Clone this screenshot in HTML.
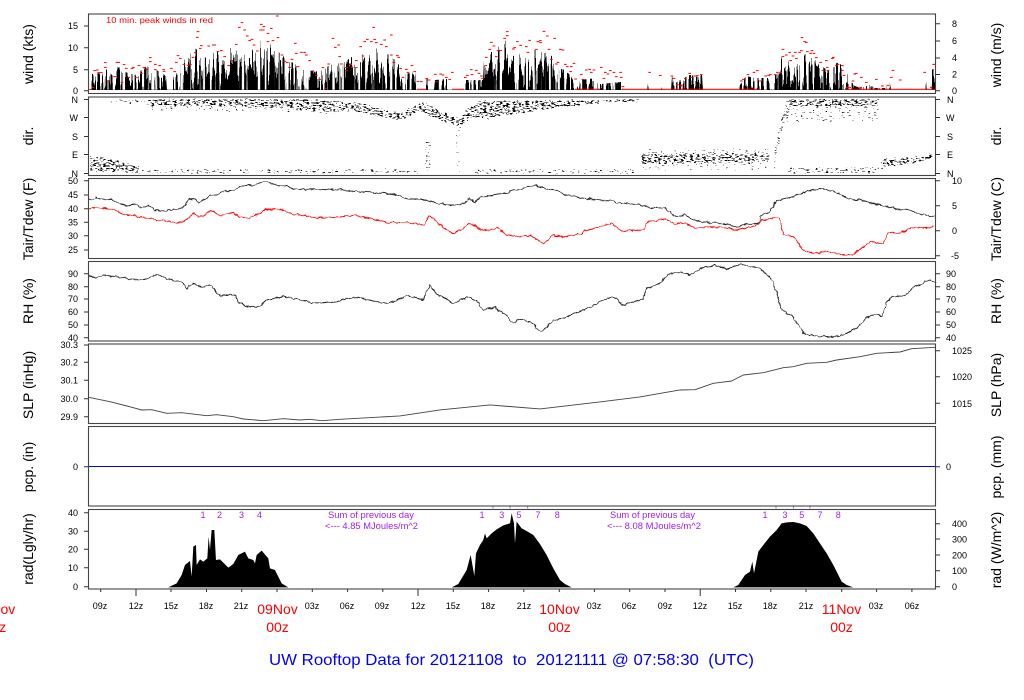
<!DOCTYPE html>
<html><head><meta charset="utf-8"><title>UW Rooftop Data</title>
<style>
html,body{margin:0;padding:0;background:#fff;width:1024px;height:700px;overflow:hidden}
svg{display:block}
text{font-family:"Liberation Sans",sans-serif;fill:#000}
.t{font-size:9px}
.l{font-size:14px;text-anchor:middle}
.e{text-anchor:end}
.r{fill:#f00}
.p{fill:#a020f0;font-size:9px;text-anchor:middle}
.q{fill:#a020f0;font-size:9px}
.c{text-anchor:middle}
</style></head><body>
<svg xmlns="http://www.w3.org/2000/svg" width="1024" height="700" viewBox="0 0 1024 700">
<defs>
<filter id="spk" filterUnits="userSpaceOnUse" x="88" y="0" width="848" height="140" color-interpolation-filters="sRGB">
<feTurbulence type="fractalNoise" baseFrequency="0.47 0.003" numOctaves="2" seed="7" result="n"/>
<feColorMatrix in="n" type="matrix" values="1 0 0 0 0  0 0 0 0 .5  0 0 0 0 .5  0 0 0 0 1" result="d"/>
<feDisplacementMap in="SourceGraphic" in2="d" scale="90" xChannelSelector="G" yChannelSelector="R" result="s"/>
<feTurbulence type="fractalNoise" baseFrequency="0.31 0.002" numOctaves="1" seed="11" result="g"/>
<feColorMatrix in="g" type="matrix" values="0 0 0 0 0  0 0 0 0 0  0 0 0 0 0  0 12 0 0 -4.2" result="gm"/>
<feComposite in="s" in2="gm" operator="in" result="c"/>
<feGaussianBlur in="c" stdDeviation=".35 0"/>
</filter>
<filter id="speck" filterUnits="userSpaceOnUse" x="88" y="97" width="848" height="79" color-interpolation-filters="sRGB">
<feGaussianBlur in="SourceAlpha" stdDeviation="1" result="b"/>
<feTurbulence type="fractalNoise" baseFrequency="0.31 0.73" numOctaves="3" seed="23" result="n"/>
<feColorMatrix in="n" type="matrix" values="0 0 0 0 0  0 0 0 0 0  0 0 0 0 0  1 0 0 0 0" result="na"/>
<feComposite in="na" in2="b" operator="arithmetic" k1="1" k2="0" k3="0" k4="0" result="m"/>
<feComponentTransfer in="m"><feFuncA type="linear" slope="40" intercept="-22.4"/></feComponentTransfer>
</filter>
<filter id="jit" filterUnits="userSpaceOnUse" x="80" y="170" width="870" height="180" color-interpolation-filters="sRGB">
<feTurbulence type="fractalNoise" baseFrequency="0.22" numOctaves="2" seed="5" result="n"/>
<feColorMatrix in="n" type="matrix" values="1 0 0 0 0  0 1 0 0 0  0 0 0 0 0  0 0 0 0 1" result="d"/>
<feDisplacementMap in="SourceGraphic" in2="d" scale="3.5" xChannelSelector="G" yChannelSelector="R"/>
</filter>
<clipPath id="envclip"><polygon points="88,90 90,90 92,74 100,73 105,68 115,78 118,66 125,72 135,75 148,65 160,72 166,76 167,90 172,90 173,72 180,65 195,48 205,57 215,52 232,47 236,46 250,45 262,39 270,42 285,58 300,67 315,72 330,65 345,62 360,50 372,46 385,52 395,60 399,65 400,75 415,72 417,90 424,90 425,78 428,78 430,90 434,90 435,80 447,79 451,90 464,90 465,80 483,80 484,60 490,52 495,52 505,38 508,48 510,58 520,52 535,50 545,52 555,58 557,68 565,70 573,78 579,90 580,80 597,78 599,90 600,84 621,82 623,90 647,90 648,75 650,90 659,90 660,84 662,90 671,90 672,76 674,84 680,80 690,75 702,75 703,90 739,90 740,85 746,76 755,78 770,78 780,72 781,56 790,62 800,65 805,54 815,60 820,65 830,72 835,62 845,66 850,80 855,86 860,88 870,85 875,88 885,88 890,82 891,90 900,90 901,84 902,90 915,90 916,86 917,90 923,90 924,72 926,80 927,90 931,90 932,70 935,66 935,90"/></clipPath>
</defs>
<rect width="1024" height="700" fill="#fff"/>

<line x1="88" y1="89.500" x2="935" y2="89.500" stroke="#bbb" stroke-width="1"/>
<g clip-path="url(#envclip)">
<g filter="url(#spk)">
<polygon transform="translate(0,90) scale(1,.6) translate(0,-90)" points="88,90 90,90 92,74 100,73 105,68 115,78 118,66 125,72 135,75 148,65 160,72 166,76 167,90 172,90 173,72 180,65 195,48 205,57 215,52 232,47 236,46 250,45 262,39 270,42 285,58 300,67 315,72 330,65 345,62 360,50 372,46 385,52 395,60 399,65 400,75 415,72 417,90 424,90 425,78 428,78 430,90 434,90 435,80 447,79 451,90 464,90 465,80 483,80 484,60 490,52 495,52 505,38 508,48 510,58 520,52 535,50 545,52 555,58 557,68 565,70 573,78 579,90 580,80 597,78 599,90 600,84 621,82 623,90 647,90 648,75 650,90 659,90 660,84 662,90 671,90 672,76 674,84 680,80 690,75 702,75 703,90 739,90 740,85 746,76 755,78 770,78 780,72 781,56 790,62 800,65 805,54 815,60 820,65 830,72 835,62 845,66 850,80 855,86 860,88 870,85 875,88 885,88 890,82 891,90 900,90 901,84 902,90 915,90 916,86 917,90 923,90 924,72 926,80 927,90 931,90 932,70 935,66 935,230 88,230"/>
</g>
</g>
<path fill="none" stroke="#f00" stroke-width="1" d="M417 89.300H427M452 89.300H464M575 89.300H600M622 89.300H760M845 89.300H935"/>
<!-- gust dashes -->
<g fill="none" stroke="#f00" stroke-width="3">
<path transform="scale(.3333)" d="M268 268h8M275 262h8M280 212h8M288 210h8M292 218h8M300 218h8M312 202h8M312 188h8M322 243h8M340 230h8M347 187h8M352 187h8M362 247h8M368 194h8M375 205h8M382 232h8M392 205h8M396 203h8M405 233h8M413 197h8M420 220h8M428 203h8M436 209h8M447 173h8M447 185h8M462 193h8M462 209h8M475 197h8M487 209h8M488 214h8M510 205h8M520 215h8M525 187h8M530 167h8M537 175h8M548 193h8M560 196h8M567 193h8M575 172h8M582 158h8M588 112h8M590 95h8M597 145h8M600 137h8M622 138h8M636 135h8M640 135h8M650 155h8M660 152h8M670 170h8M682 197h8M690 182h8M705 133h8M714 82h8M722 68h8M730 90h8M738 108h8M745 122h8M752 118h8M758 135h8M768 153h8M778 90h8M780 73h8M786 90h8M788 80h8M800 100h8M800 125h8M810 85h8M815 122h8M828 48h8M830 113h8M842 165h8M850 184h8M858 187h8M865 202h8M872 178h8M882 130h8M885 160h8M890 200h8M900 157h8M910 157h8M915 165h8M925 182h8M935 213h8M945 226h8M955 238h8M965 203h8M972 265h8M982 192h8M995 115h8M1002 142h8M1012 135h8M1015 170h8"/>
<path transform="translate(340,0) scale(.3333)" d="M0 192h8M15 203h8M15 212h8M28 193h8M32 203h8M45 203h8M45 182h8M58 140h8M65 168h8M70 125h8M78 118h8M90 125h8M97 82h8M100 118h8M105 128h8M120 133h8M130 120h8M135 140h8M150 105h8M150 165h8M158 187h8M168 167h8M172 172h8M178 205h8M185 232h8M195 208h8M200 217h8M212 197h8M220 215h8M230 245h8M240 245h8M256 236h8M263 240h8M282 223h8M285 245h8M298 222h8M305 225h8M315 232h8M325 238h8M333 217h8M372 232h8M378 226h8M390 209h8M392 224h8M405 211h8M413 220h8M420 228h8M424 235h8M433 197h8M435 172h8M445 148h8M450 127h8M458 138h8M465 170h8M470 152h8M478 152h8M490 115h8M498 95h8M498 107h8M516 147h8M520 143h8M528 125h8M538 136h8M555 140h8M560 157h8M565 121h8M585 148h8M590 125h8M597 122h8M598 128h8M608 94h8M618 108h8M623 148h8M630 178h8M640 115h8M645 192h8M650 187h8M657 148h8M665 150h8M672 193h8M678 200h8M688 215h8M690 200h8M698 190h8M703 237h8M720 223h8M725 238h8M735 210h8M745 208h8M750 217h8M758 210h8M780 202h8M788 235h8M792 217h8M800 222h8M807 212h8M818 217h8M825 230h8M838 217h8M840 232h8M845 260h8M925 217h8M957 226h8M992 228h8M998 235h8M1008 254h8M1020 258h8"/>
<path transform="translate(680,0) scale(.3333)" d="M0 255h8M12 236h8M25 220h8M30 232h8M40 228h8M48 227h8M60 224h8M180 243h8M186 238h8M200 224h8M218 217h8M228 212h8M238 243h8M253 228h8M262 226h8M267 224h8M282 224h8M288 217h8M298 217h8M305 148h8M305 170h8M315 165h8M325 157h8M328 182h8M335 168h8M342 157h8M345 175h8M355 157h8M360 152h8M362 113h8M370 125h8M375 127h8M378 155h8M388 160h8M392 152h8M398 160h8M405 173h8M418 187h8M425 211h8M435 182h8M438 202h8M440 211h8M453 175h8M456 172h8M465 197h8M470 193h8M483 197h8M483 211h8M488 226h8M498 262h8M505 262h8M515 243h8M520 222h8M525 220h8M540 232h8M538 262h8M555 247h8M585 238h8M603 258h8M620 256h8M630 232h8M635 211h8M657 240h8M730 217h8M750 262h8M757 193h8"/>
</g>

<!-- wind direction scatter -->
<g filter="url(#speck)" fill="#000">
<polygon fill-opacity=".85" points="106,98 150,98 150,106 106,104"/>
<polygon points="150,98 300,98 340,100 360,102 385,109 400,112 420,100 438,108 452,115 460,118 466,108 480,100 640,98 640,103 600,104 550,110 508,116 490,120 472,118 462,127 450,125 440,122 420,112 400,122 380,118 360,113 340,112 300,110 250,108 150,106"/>
<polygon fill-opacity=".8" points="150,106 300,110 340,112 340,116 300,114 150,112"/>
<polygon points="89,155 112,158 140,165 140,174 89,172"/>
<polygon fill-opacity=".86" points="140,168 420,168 420,175 140,175"/>
<polygon fill-opacity=".86" points="470,168 635,168 635,175 470,175"/>
<polygon points="640,154 770,154 770,162 640,164"/>
<polygon fill-opacity=".78" points="640,147 770,147 770,172 640,172"/>
<polygon points="880,158 925,155 935,148 935,158 925,162 880,170"/>
<polygon points="785,98 880,98 880,106 785,107"/>
<polygon fill-opacity=".78" points="785,107 880,106 880,122 785,125"/>
<polygon fill-opacity=".86" points="787,166 880,166 880,175 787,175"/>
<polygon fill-opacity=".84" points="424,140 432,140 432,172 424,172"/>
<polygon fill-opacity=".82" points="455,122 462,122 462,174 455,174"/>
<polygon fill-opacity=".88" points="770,172 778,125 785,104 790,110 782,135 776,172"/>
</g>

<g filter="url(#jit)">
<g fill="none" stroke="#222" stroke-width="2.800" stroke-linejoin="round">
<polyline transform="translate(0,175) scale(.3333)" points="266,72 275,76 288,65 300,72 320,73 345,77 375,92 405,87 425,100 445,92 465,105 495,108 510,103 535,105 555,90 570,73 585,72 595,82 605,78 630,62 650,60 670,50 700,45 720,35 745,30 765,31 790,21 805,22 830,30 860,33 885,42 920,43 960,43 990,44 1020,44"/>
<polyline transform="translate(340,175) scale(.3333)" points="0,44 50,50 100,52 170,60 205,72 240,72 280,82 320,90 350,90 370,85 390,70 405,82 420,65 440,65 470,57 500,55 515,44 540,45 555,37 575,35 590,30 605,38 625,42 650,45 670,58 710,67 750,72 815,78 830,82 900,90 930,98 970,97 990,112 1005,124 1020,124"/>
<polyline transform="translate(680,175) scale(.3333)" points="0,122 15,120 30,130 50,138 90,143 130,145 170,156 210,146 235,147 245,120 265,114 290,78 320,70 350,60 375,50 410,42 440,43 470,52 500,68 520,75 540,72 560,82 600,90 620,95 650,102 685,105 720,118 750,125 766,120"/>
<g stroke="#f00">
<polyline transform="translate(0,175) scale(.3333)" points="266,102 285,97 310,100 340,105 375,120 400,120 425,127 450,132 500,138 535,145 560,135 582,115 595,125 615,120 632,105 660,122 700,112 715,125 750,130 775,118 795,102 845,103 880,118 920,122 950,130 985,127 1020,125"/>
<polyline transform="translate(340,175) scale(.3333)" points="0,126 45,121 100,132 140,143 200,142 250,150 265,124 280,130 310,158 337,176 365,162 387,145 410,155 430,168 470,158 500,178 525,185 575,182 590,195 610,205 640,180 670,185 720,178 735,168 815,145 845,168 912,165 925,140 975,132 1005,146 1020,145"/>
<polyline transform="translate(680,175) scale(.3333)" points="0,143 20,146 45,160 90,155 130,158 170,165 215,155 235,150 245,135 285,128 298,130 310,178 340,185 370,225 400,235 450,230 490,240 520,240 550,215 570,198 590,205 610,205 625,172 660,175 695,160 760,156"/>
</g>
<polyline transform="translate(0,175) scale(.3333)" points="266,303 290,308 310,300 350,305 400,313 440,312 470,298 510,313 545,322 562,342 578,323 590,332 612,336 628,330 660,362 705,358 715,380 750,398 785,390 800,375 850,365 890,372 930,382 960,384 1020,378"/>
<polyline transform="translate(340,175) scale(.3333)" points="0,378 40,365 100,378 140,385 205,363 250,375 268,330 288,355 340,385 380,367 410,378 430,405 465,397 500,422 520,445 535,432 580,445 590,462 607,470 640,435 665,432 730,405 810,367 830,368 845,390 910,372 920,340 965,322 985,295 1020,293"/>
<polyline transform="translate(680,175) scale(.3333)" points="0,290 30,300 60,280 105,270 140,283 180,268 240,280 280,318 305,405 340,428 375,478 410,483 440,485 480,483 520,465 540,450 570,420 590,418 607,425 620,380 640,365 675,362 700,338 750,313 766,325"/>
</g>
</g>
<g fill="none" stroke="#444" stroke-width="2.800" stroke-linejoin="round">
<polyline transform="translate(0,340) scale(.3333)" points="266,172 330,185 400,203 425,210 455,209 500,220 545,218 620,227 650,224 700,230 730,237 790,242 850,236 900,240 930,238 965,242 1020,238"/>
<polyline transform="scale(.3333)" points="1020,1258 1200,1248 1320,1230 1470,1215 1620,1227 1800,1206 1920,1191 2040,1170"/>
<polyline transform="translate(680,340) scale(.3333)" points="0,150 45,149 100,130 155,123 190,105 250,98 310,83 340,80 380,70 440,67 470,60 540,50 590,40 660,36 695,26 766,22"/>
</g>
<line x1="88" y1="466.500" x2="935" y2="466.500" stroke="#00f" stroke-width="1"/>

<g fill="#000">
<polygon transform="translate(0,500) scale(.3333)" points="505,262 530,250 545,225 555,195 570,183 575,230 580,140 588,135 590,195 600,178 610,185 622,175 626,110 630,150 635,90 643,90 648,180 660,178 685,203 700,192 715,165 735,155 745,175 760,180 765,190 770,165 785,152 805,175 810,205 825,210 845,250 865,262"/>
<polygon transform="translate(340,500) scale(.3333)" points="335,262 355,252 365,235 380,210 392,165 403,228 408,160 420,135 430,120 435,100 440,115 455,100 470,88 490,76 510,70 515,40 522,70 525,130 530,65 545,85 560,93 580,105 600,132 620,165 640,205 660,240 675,252 695,262"/>
<polygon transform="translate(680,500) scale(.3333)" points="160,262 175,255 195,225 210,215 217,185 222,220 235,155 250,135 270,110 290,90 305,70 320,67 340,66 360,70 380,78 400,100 420,130 440,160 460,195 485,245 500,255 520,262"/>
</g>

<!-- frames -->
<g fill="none" stroke="#444" stroke-width="1.100">
<rect x="88.500" y="14" width="847" height="79.500"/>
<rect x="88.500" y="97" width="847" height="78.500"/>
<rect x="88.500" y="178.500" width="847" height="80"/>
<rect x="88.500" y="261.500" width="847" height="79.500"/>
<rect x="88.500" y="344" width="847" height="79.500"/>
<rect x="88.500" y="426.500" width="847" height="79.500"/>
<rect x="88.500" y="509.500" width="847" height="79.500"/>
</g>
<!-- ticks -->
<path fill="none" stroke="#333" stroke-width="1" d="M84 26H88M84 47.700H88M84 69.700H88M84 90.700H88M935 23.700H940M935 41H940M935 58H940M935 74.500H940M935 90.700H940
M84 99.500H88M84 117.500H88M84 136.500H88M84 154.500H88M84 173.500H88M935 99.500H940M935 117.500H940M935 136.500H940M935 154.500H940M935 173.500H940
M84 180.700H88M84 195H88M84 208.700H88M84 222.300H88M84 235.700H88M84 250H88M935 180.700H940M935 205.700H940M935 230.700H940M935 255.700H940
M84 273.700H88M84 286.700H88M84 299H88M84 312H88M84 325H88M84 337.700H88M935 273.700H940M935 286.700H940M935 299H940M935 312H940M935 325H940M935 337.700H940
M84 345H88M84 362.300H88M84 380.300H88M84 398.700H88M84 416.700H88M935 350.700H940M935 376.700H940M935 403.300H940
M84 466.700H88M935 466.700H940
M84 512.700H88M84 531.300H88M84 549.300H88M84 567.700H88M84 586.700H88M935 523.700H940M935 539H940M935 555H940M935 570.700H940M935 586.700H940
M100.700 589V592M136 589V596M171 589V592M206.500 589V592M241.700 589V592M277 589V592M312.300 589V592M347.600 589V592M382.800 589V592M418 589V596M453.300 589V592M488.600 589V592M523.800 589V592M559.300 589V592M594.400 589V592M629.700 589V592M665 589V592M700.200 589V596M735.500 589V592M770.800 589V592M806 589V592M841.700 589V592M876.600 589V592M911.900 589V592"/>

<!-- left y tick labels -->
<g class="t">
<text class="t e" x="78" y="29">15</text><text class="t e" x="78" y="51">10</text><text class="t e" x="78" y="73">5</text><text class="t e" x="78" y="94">0</text>
<text class="t e" x="78" y="103">N</text><text class="t e" x="78" y="121">W</text><text class="t e" x="78" y="140">S</text><text class="t e" x="78" y="158">E</text><text class="t e" x="78" y="177">N</text>
<text class="t e" x="78" y="184">50</text><text class="t e" x="78" y="198">45</text><text class="t e" x="78" y="212">40</text><text class="t e" x="78" y="225.500">35</text><text class="t e" x="78" y="239">30</text><text class="t e" x="78" y="253">25</text>
<text class="t e" x="78" y="277">90</text><text class="t e" x="78" y="290">80</text><text class="t e" x="78" y="302">70</text><text class="t e" x="78" y="315">60</text><text class="t e" x="78" y="328">50</text><text class="t e" x="78" y="341">40</text>
<text class="t e" x="78" y="348">30.3</text><text class="t e" x="78" y="365.500">30.2</text><text class="t e" x="78" y="383.500">30.1</text><text class="t e" x="78" y="402">30.0</text><text class="t e" x="78" y="420">29.9</text>
<text class="t e" x="78" y="470">0</text>
<text class="t e" x="78" y="516">40</text><text class="t e" x="78" y="534.500">30</text><text class="t e" x="78" y="552.500">20</text><text class="t e" x="78" y="571">10</text><text class="t e" x="78" y="590">0</text>
<!-- right y tick labels -->
<text class="t" x="952" y="27">8</text><text class="t" x="952" y="44">6</text><text class="t" x="952" y="61">4</text><text class="t" x="952" y="77.500">2</text><text class="t" x="952" y="94">0</text>
<text class="t" x="947" y="103">N</text><text class="t" x="946" y="121">W</text><text class="t" x="947" y="140">S</text><text class="t" x="947" y="158">E</text><text class="t" x="947" y="177">N</text>
<text class="t" x="952" y="184">10</text><text class="t" x="952" y="209">5</text><text class="t" x="952" y="234">0</text><text class="t" x="951" y="259">-5</text>
<text class="t" x="946" y="277">90</text><text class="t" x="946" y="290">80</text><text class="t" x="946" y="302.500">70</text><text class="t" x="946" y="315">60</text><text class="t" x="946" y="328">50</text><text class="t" x="946" y="341">40</text>
<text class="t" x="952" y="354">1025</text><text class="t" x="952" y="380">1020</text><text class="t" x="952" y="407">1015</text>
<text class="t" x="946" y="470">0</text>
<text class="t" x="952" y="527">400</text><text class="t" x="952" y="542.500">300</text><text class="t" x="952" y="558.500">200</text><text class="t" x="952" y="574">100</text><text class="t" x="952" y="590">0</text>
</g>

<!-- axis labels -->
<text class="l" transform="translate(33,54) rotate(-90)">wind (kts)</text>
<text class="l" transform="translate(33,136) rotate(-90)">dir.</text>
<text class="l" transform="translate(33,219) rotate(-90)">Tair/Tdew (F)</text>
<text class="l" transform="translate(33,301) rotate(-90)">RH (%)</text>
<text class="l" transform="translate(33,385) rotate(-90)">SLP (inHg)</text>
<text class="l" transform="translate(33,467) rotate(-90)">pcp. (in)</text>
<text class="l" transform="translate(33,549) rotate(-90)">rad(Lgly/hr)</text>
<text class="l" transform="translate(1001,55) rotate(-90)">wind (m/s)</text>
<text class="l" transform="translate(1001,136) rotate(-90)">dir.</text>
<text class="l" transform="translate(1001,219) rotate(-90)">Tair/Tdew (C)</text>
<text class="l" transform="translate(1001,301) rotate(-90)">RH (%)</text>
<text class="l" transform="translate(1001,385) rotate(-90)">SLP (hPa)</text>
<text class="l" transform="translate(1001,467) rotate(-90)">pcp. (mm)</text>
<text class="l" transform="translate(1001,550) rotate(-90)">rad (W/m^2)</text>

<text class="r" x="106" y="23" font-size="8.500" textLength="107" lengthAdjust="spacingAndGlyphs">10 min. peak winds in red</text>

<!-- x tick labels -->
<g>
<text class="t c" x="100" y="609">09z</text><text class="t c" x="136" y="609">12z</text><text class="t c" x="171" y="609">15z</text><text class="t c" x="206" y="609">18z</text><text class="t c" x="241" y="609">21z</text><text class="t c" x="312" y="609">03z</text><text class="t c" x="347" y="609">06z</text><text class="t c" x="382" y="609">09z</text><text class="t c" x="418" y="609">12z</text><text class="t c" x="453" y="609">15z</text><text class="t c" x="488" y="609">18z</text><text class="t c" x="524" y="609">21z</text><text class="t c" x="594" y="609">03z</text><text class="t c" x="629" y="609">06z</text><text class="t c" x="665" y="609">09z</text><text class="t c" x="700" y="609">12z</text><text class="t c" x="735" y="609">15z</text><text class="t c" x="770" y="609">18z</text><text class="t c" x="806" y="609">21z</text><text class="t c" x="876" y="609">03z</text><text class="t c" x="912" y="609">06z</text>
</g>
<g font-size="14">
<text class="r c" x="-5" y="614">08Nov</text><text class="r c" x="-5" y="632">00z</text>
<text class="r c" x="277.500" y="614">09Nov</text><text class="r c" x="277.500" y="632">00z</text>
<text class="r c" x="559.500" y="614">10Nov</text><text class="r c" x="559.500" y="632">00z</text>
<text class="r c" x="841.500" y="614">11Nov</text><text class="r c" x="841.500" y="632">00z</text>
</g>

<!-- purple annotations -->
<text class="p" x="203" y="518">1</text><text class="p" x="219.500" y="518">2</text><text class="p" x="241.500" y="518">3</text><text class="p" x="259.500" y="518">4</text>
<text class="p" x="482" y="518">1</text><text class="p" x="493" y="513">'</text><text class="p" x="501.700" y="518">3</text><text class="p" x="510" y="513">'</text><text class="p" x="519" y="518">5</text><text class="p" x="527.700" y="513">'</text><text class="p" x="538" y="518">7</text><text class="p" x="557.300" y="518">8</text>
<text class="p" x="765" y="518">1</text><text class="p" x="776" y="513">'</text><text class="p" x="785" y="518">3</text><text class="p" x="793.300" y="513">'</text><text class="p" x="801.700" y="518">5</text><text class="p" x="810" y="513">'</text><text class="p" x="820" y="518">7</text><text class="p" x="838.300" y="518">8</text>
<text class="q" x="328" y="518" textLength="86" lengthAdjust="spacingAndGlyphs">Sum of previous day</text>
<text class="q" x="325" y="529" textLength="93" lengthAdjust="spacingAndGlyphs">&lt;--- 4.85 MJoules/m^2</text>
<text class="q" x="610" y="518" textLength="85" lengthAdjust="spacingAndGlyphs">Sum of previous day</text>
<text class="q" x="607" y="529" textLength="94" lengthAdjust="spacingAndGlyphs">&lt;--- 8.08 MJoules/m^2</text>

<text x="269" y="665" font-size="16" fill="#00f" style="fill:#00f" textLength="485" lengthAdjust="spacingAndGlyphs">UW Rooftop Data for 20121108&#160;&#160;to&#160;&#160;20121111 @ 07:58:30&#160;&#160;(UTC)</text>
</svg>
</body></html>
